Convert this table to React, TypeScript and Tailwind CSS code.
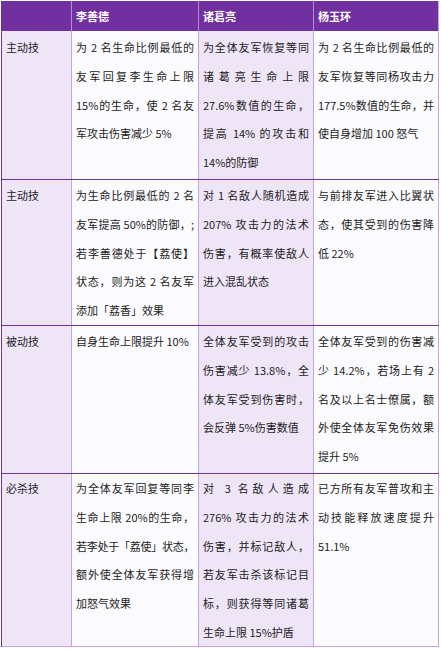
import React from "react"

type Row = {
  skill: string
  h: string
  pad: string
  cols: string[][]
}

// each cell is given as its visual lines, so the wraps match the original sheet
const rows: Row[] = [
  {
    skill: "主动技",
    h: "h-[148px]",
    pad: "pt-[2px]",
    cols: [
      ["为 2 名生命比例最低的", "友军回复李生命上限", "15%的生命，使 2 名友", "军攻击伤害减少 5%"],
      ["为全体友军恢复等同", "诸葛亮生命上限", "27.6%数值的生命，", "提高 14% 的攻击和", "14%的防御"],
      ["为 2 名生命比例最低的", "友军恢复等同杨攻击力", "177.5%数值的生命，并", "使自身增加 100 怒气"],
    ],
  },
  {
    skill: "主动技",
    h: "h-[146px] border-t border-[#7030a0]",
    pad: "pt-[1px]",
    cols: [
      ["为生命比例最低的 2 名", "友军提高 50%的防御，;", "若李善德处于【荔使】", "状态，则为这 2 名友军", "添加「荔香」效果"],
      ["对 1 名敌人随机造成", "207% 攻击力的法术", "伤害，有概率使敌人", "进入混乱状态"],
      ["与前排友军进入比翼状", "态，使其受到的伤害降", "低 22%"],
    ],
  },
  {
    skill: "被动技",
    h: "h-[148px] border-t border-[#7030a0]",
    pad: "pt-[1px]",
    cols: [
      ["自身生命上限提升 10%"],
      ["全体友军受到的攻击", "伤害减少 13.8%，全", "体友军受到伤害时，", "会反弹 5%伤害数值"],
      ["全体友军受到的伤害减", "少 14.2%，若场上有 2", "名及以上名士僚属，额", "外使全体友军免伤效果", "提升 5%"],
    ],
  },
  {
    skill: "必杀技",
    h: "h-[174px] border-y border-t-[#7030a0] border-b-[#c7a3e6]",
    pad: "pt-0",
    cols: [
      ["为全体友军回复等同李", "生命上限 20%的生命，", "若李处于「荔使」状态，", "额外使全体友军获得增", "加怒气效果"],
      ["对 3 名敌人造成", "276% 攻击力的法术", "伤害，并标记敌人，", "若友军击杀该标记目", "标，则获得等同诸葛", "生命上限 15%护盾"],
      ["已方所有友军普攻和主", "动技能释放速度提升", "51.1%"],
    ],
  },
]

const colBg = ["bg-[#fbfbfe]", "bg-[#eee5f7]", "bg-[#fbfbfe]"]

function Lines({ lines }: { lines: string[] }) {
  return (
    <>
      {lines.map((line, i) => (
        <div
          key={i}
          className={
            i < lines.length - 1
              ? line.length > 10 && line.includes("「")
                ? "[text-align-last:justify] tracking-[-0.5px]"
                : "[text-align-last:justify]"
              : ""
          }
        >
          {line}
        </div>
      ))}
    </>
  )
}

export default function App() {
  return (
    <div
      lang="zh-CN"
      className="min-h-screen bg-white pt-px pl-px font-['Noto_Sans_CJK_SC',sans-serif] text-[11px] text-[#1c1c1c]"
    >
      <div className="w-[438px] border-l border-[#7030a0]">
        {/* header */}
        <div className="grid h-[30px] grid-cols-[70px_127px_115px_125px] bg-[#7030a0] font-bold text-white">
          <div className="border-r border-[#b58ad8]" />
          <div className="flex items-center border-r border-[#b58ad8] pl-[4px] pt-[1px]">李善德</div>
          <div className="flex items-center border-r border-[#b58ad8] pl-[4px] pt-[1px]">诸葛亮</div>
          <div className="flex items-center border-r border-[#c7a3e6] pl-[4px] pt-[1px]">杨玉环</div>
        </div>

        {rows.map((row, r) => (
          <div key={r} className={`grid grid-cols-[70px_127px_115px_125px] ${row.h}`}>
            <div className={`overflow-hidden border-r border-[#c7a3e6] bg-[#eee5f7] pl-[4px] leading-[28.8px] ${row.pad}`}>
              {row.skill}
            </div>
            {row.cols.map((lines, c) => (
              <div
                key={c}
                className={`overflow-hidden border-r border-[#c7a3e6] px-[4px] leading-[28.8px] ${row.pad} ${colBg[c]}`}
              >
                <Lines lines={lines} />
              </div>
            ))}
          </div>
        ))}
      </div>
    </div>
  )
}
